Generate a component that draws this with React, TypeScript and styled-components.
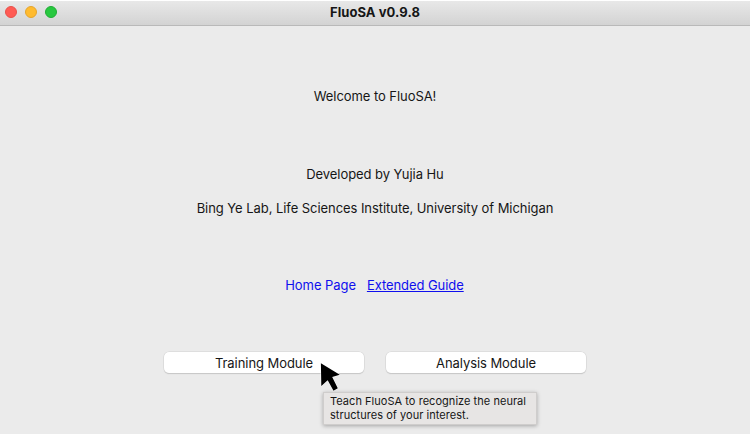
import React from "react";
import styled, { createGlobalStyle } from "styled-components";

const GlobalStyle = createGlobalStyle`
  * { box-sizing: border-box; }
  body {
    margin: 0;
    background: #fff;
    overflow: hidden;
    font-family: Inter, "Liberation Sans", sans-serif;
    color: #161616;
  }
`;

const Window = styled.div`
  position: relative;
  width: 750px;
  height: 434px;
  padding-top: 1px;
  display: flex;
  flex-direction: column;
`;

const TitleBar = styled.header`
  display: grid;
  grid-template-columns: 1fr auto 1fr;
  align-items: center;
  height: 25px;
  flex: none;
  padding: 0 5px 2px;
  background: linear-gradient(#e8e8e8, #d3d3d3);
  border-bottom: 1px solid #b9b9b9;
`;

const Lights = styled.div`
  display: flex;
  gap: 8px;
`;

const Light = styled.span<{ $fill: string; $edge: string }>`
  width: 12px;
  height: 12px;
  border-radius: 50%;
  background: ${(p) => p.$fill};
  border: 1px solid ${(p) => p.$edge};
`;

const Title = styled.h1`
  margin: 0;
  font-size: 13px;
  line-height: 20px;
  font-weight: 700;
  letter-spacing: 0.06px;
`;

const Content = styled.main`
  flex: 1;
  display: flex;
  flex-direction: column;
  align-items: center;
  background: #ebebeb;
  padding-top: 60px;
`;

const Line = styled.p<{ $gap: number }>`
  margin: 0 0 ${(p) => p.$gap}px;
  font-size: 13px;
  line-height: 20px;
  white-space: nowrap;
  letter-spacing: -0.06px;
`;

const Links = styled.nav`
  display: flex;
  gap: 11px;
  margin-bottom: 57px;
  padding-right: 1px;
`;

const Link = styled.a<{ $underlined?: boolean }>`
  font-size: 13px;
  line-height: 20px;
  letter-spacing: -0.07px;
  color: #0f0fee;
  text-decoration: ${(p) => (p.$underlined ? "underline" : "none")};
  text-underline-offset: 1px;
  text-decoration-skip-ink: none;
`;

const Buttons = styled.div`
  display: flex;
  gap: 22px;
`;

const Button = styled.button`
  width: 200px;
  height: 21px;
  padding: 0;
  border: 0;
  border-radius: 5px;
  background: #fff;
  box-shadow: 0 0 0 0.5px #d2d2d2, 0 1px 1px #bdbdbd;
  font: 13px/20px Inter, "Liberation Sans", sans-serif;
  letter-spacing: -0.06px;
  color: #161616;
`;

const Tooltip = styled.div`
  position: absolute;
  left: 323px;
  top: 392px;
  width: 214px;
  height: 33px;
  padding: 1px 6px;
  background: #e7e5e4;
  border: 1px solid #cfcdcc;
  box-shadow: 0 1px 4px rgba(0, 0, 0, 0.3);
  font-size: 11px;
  line-height: 14px;
  letter-spacing: 0.04px;
  white-space: nowrap;
`;

const Pointer = styled.svg`
  position: absolute;
  left: 318px;
  top: 360px;
  width: 26px;
  height: 34px;
`;

export default function App() {
  return (
    <>
      <GlobalStyle />
      <Window>
        <TitleBar>
          <Lights>
            <Light $fill="#ff5b54" $edge="#e8514a" />
            <Light $fill="#ffbb2f" $edge="#e5a52b" />
            <Light $fill="#28c840" $edge="#20ad34" />
          </Lights>
          <Title>FluoSA v0.9.8</Title>
        </TitleBar>
        <Content>
          <Line $gap={58}>Welcome to FluoSA!</Line>
          <Line $gap={14}>Developed by Yujia Hu</Line>
          <Line $gap={57}>
            Bing Ye Lab, Life Sciences Institute, University of Michigan
          </Line>
          <Links>
            <Link>Home Page</Link>
            <Link $underlined>Extended Guide</Link>
          </Links>
          <Buttons>
            <Button>Training Module</Button>
            <Button>Analysis Module</Button>
          </Buttons>
        </Content>
        <Tooltip>
          Teach FluoSA to recognize the neural
          <br />
          structures of your interest.
        </Tooltip>
        <Pointer viewBox="0 0 26 34">
          <path
            d="M2.9 3.3 L21.8 14.8 L14.2 17 L19.8 28.2 L15.5 30.7 L9.7 20.3 L3.3 26 Z"
            fill="#000"
            stroke="#fff"
            strokeWidth="1"
            paintOrder="stroke"
          />
        </Pointer>
      </Window>
    </>
  );
}
